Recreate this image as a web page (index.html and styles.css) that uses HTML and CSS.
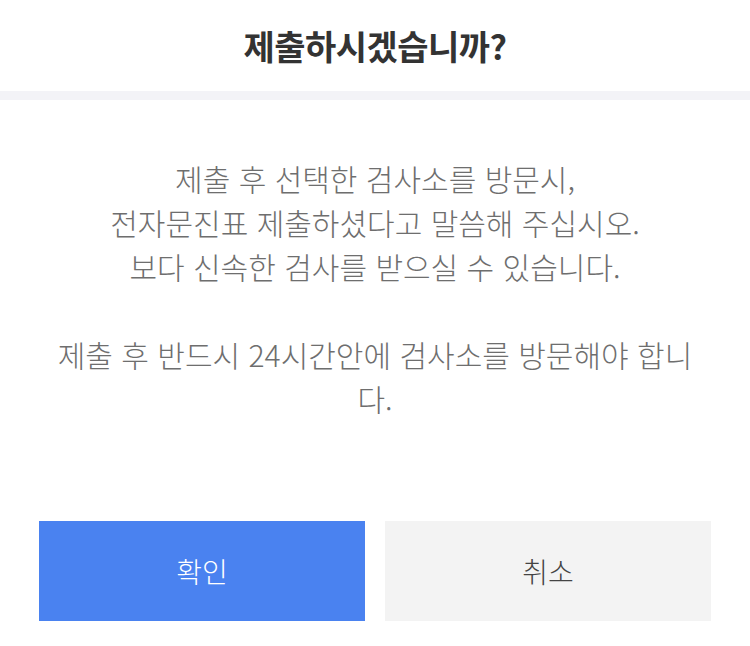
FILE: index.html
```html
<!DOCTYPE html>
<html lang="ko">
<head>
<meta charset="utf-8">
<link rel="stylesheet" href="styles.css">
</head>
<body>
<div class="dialog">
  <header class="header">
    <h1 class="title">제출하시겠습니까?</h1>
  </header>
  <div class="divider"></div>
  <div class="content">
    <p class="msg">제출 후 선택한 검사소를 방문시,<br>전자문진표 제출하셨다고 말씀해 주십시오.<br>보다 신속한 검사를 받으실 수 있습니다.</p>
    <p class="msg">제출 후 반드시 24시간안에 검사소를 방문해야 합니다.</p>
  </div>
  <div class="actions">
    <button class="btn btn-primary">확인</button>
    <button class="btn btn-secondary">취소</button>
  </div>
</div>
</body>
</html>
```
FILE: styles.css
```css
* { box-sizing: border-box; }
html, body { margin: 0; padding: 0; background: #fff; }
body {
  font-family: "Noto Sans CJK KR", "Noto Sans", sans-serif;
  width: 750px;
  height: 646px;
  overflow: hidden;
}
.dialog { display: flex; flex-direction: column; }
.header {
  height: 91px;
  display: flex;
  align-items: center;
  justify-content: center;
}
.title {
  margin: 0;
  font-size: 34px;
  font-weight: 700;
  color: #333;
  letter-spacing: -0.5px;
}
.divider { height: 9px; background: #f3f3f7; }
.content {
  padding: 56px 52px 0;
  height: 421px;
  text-align: center;
  color: #6e6e6e;
  font-size: 30px;
  font-weight: 300;
  line-height: 44px;
}
.msg { margin: 0 0 44px; }
.actions {
  display: flex;
  gap: 20px;
  padding: 0 39px;
}
.btn {
  flex: 1;
  height: 100px;
  border: 0;
  font-family: inherit;
  font-size: 28px;
  font-weight: 300;
  padding: 0;
}
.btn-primary { background: #4a82f0; color: #fff; }
.btn-secondary { background: #f3f3f3; color: #444; }
```
